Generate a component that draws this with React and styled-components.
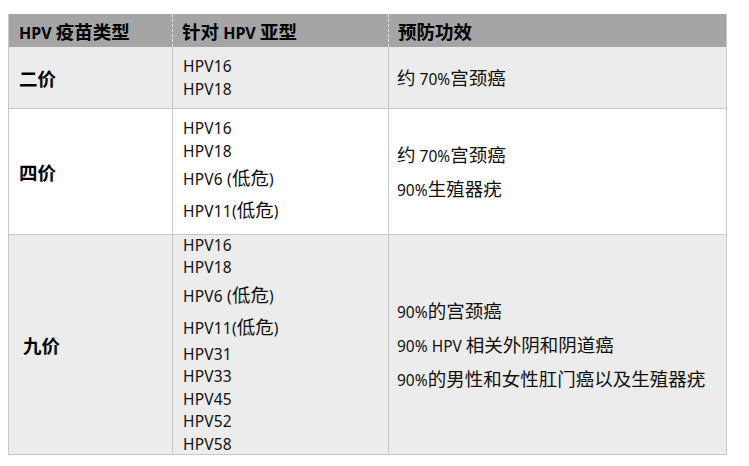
import React from 'react'
import styled, { createGlobalStyle } from 'styled-components'

const GlobalStyle = createGlobalStyle`
  body {
    margin: 0;
    background: #fff;
    font-family: "Noto Sans", "Noto Sans CJK SC", sans-serif;
    color: #111;
  }
`

const Page = styled.div`
  padding: 14px 0 0 8px;
`

const Table = styled.div`
  display: grid;
  grid-template-columns: 164px 216px 338px;
  width: 718px;
  border-left: 1px solid #c8c8c8;
  box-sizing: border-box;
`

const HeadCell = styled.div`
  height: 33px;
  display: flex;
  align-items: center;
  padding-left: ${p => p.$pad}px;
  background: #a5a5a5;
  font-weight: 700;
  font-size: 16px;
  color: #000;
  box-sizing: border-box;
  border-right: 1px ${p => (p.$last ? 'solid #c8c8c8' : 'dashed #e4e4e4')};
`

const Cell = styled.div`
  height: ${p => p.$h}px;
  display: flex;
  flex-direction: column;
  justify-content: center;
  padding-left: ${p => p.$pad}px;
  background: ${p => p.$bg};
  border-right: 1px solid #c8c8c8;
  border-bottom: 1px solid #c8c8c8;
  box-sizing: border-box;
  font-size: 15.5px;
`

const Label = styled.div`
  font-weight: 700;
  font-size: 16px;
  color: #000;
`

const Line = styled.div`
  line-height: ${p => (p.$tall ? 30 : 22.5)}px;
  white-space: nowrap;
  letter-spacing: 0.2px;
`

const EffectLine = styled.div`
  line-height: 32px;
  white-space: nowrap;
`

const Cjk = styled.span`
  font-family: "Noto Sans CJK SC", sans-serif;
  font-size: 18.5px;
  letter-spacing: 0;
`

function Text({ children }) {
  const parts = children.split(/([\u4e00-\u9fff]+)/)
  return parts.map((s, i) =>
    /[\u4e00-\u9fff]/.test(s) ? <Cjk key={i}>{s}</Cjk> : s
  )
}

const rows = [
  {
    name: '二价',
    h: 62,
    bg: '#ececec',
    pad: 10,
    types: ['HPV16', 'HPV18'],
    effects: ['约 70%宫颈癌'],
  },
  {
    name: '四价',
    h: 126,
    bg: '#ffffff',
    pad: 10,
    types: ['HPV16', 'HPV18', 'HPV6 (低危)', 'HPV11(低危)'],
    effects: ['约 70%宫颈癌', '90%生殖器疣'],
  },
  {
    name: '九价',
    h: 220,
    bg: '#ececec',
    pad: 14,
    types: [
      'HPV16', 'HPV18', 'HPV6 (低危)', 'HPV11(低危)',
      'HPV31', 'HPV33', 'HPV45', 'HPV52', 'HPV58',
    ],
    effects: ['90%的宫颈癌', '90% HPV 相关外阴和阴道癌', '90%的男性和女性肛门癌以及生殖器疣'],
  },
]

export default function App() {
  return (
    <Page>
      <GlobalStyle />
      <Table>
        <HeadCell $pad={10}><span>HPV <Cjk>疫苗类型</Cjk></span></HeadCell>
        <HeadCell $pad={9}><span><Cjk>针对</Cjk> HPV <Cjk>亚型</Cjk></span></HeadCell>
        <HeadCell $pad={9} $last><Cjk>预防功效</Cjk></HeadCell>
        {rows.map(r => (
          <React.Fragment key={r.name}>
            <Cell $h={r.h} $bg={r.bg} $pad={r.pad}>
              <Label><Cjk>{r.name}</Cjk></Label>
            </Cell>
            <Cell $h={r.h} $bg={r.bg} $pad={10}>
              {r.types.map((t, i) => (
                <Line key={i} $tall={/[\u4e00-\u9fff]/.test(t)}>
                  <Text>{t}</Text>
                </Line>
              ))}
            </Cell>
            <Cell $h={r.h} $bg={r.bg} $pad={8}>
              {r.effects.map((e, i) => (
                <EffectLine key={i}><Text>{e}</Text></EffectLine>
              ))}
            </Cell>
          </React.Fragment>
        ))}
      </Table>
    </Page>
  )
}
